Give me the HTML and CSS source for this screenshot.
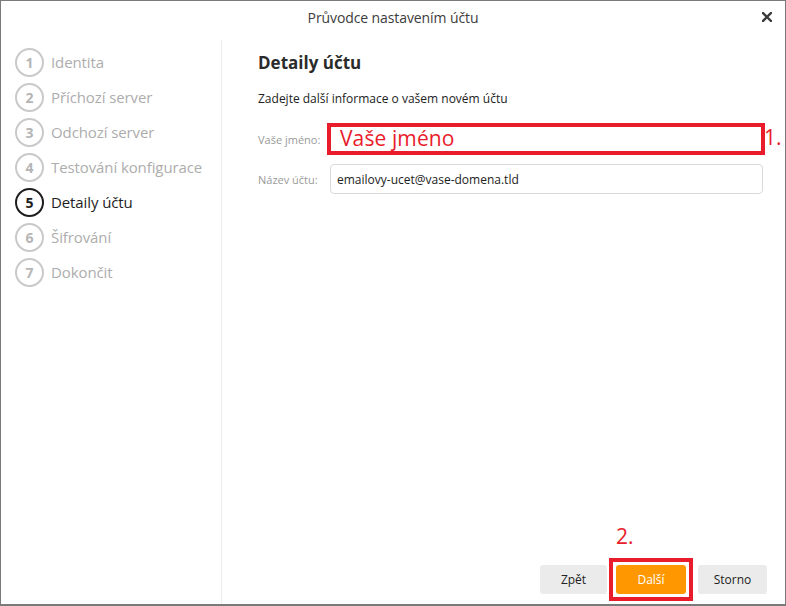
FILE: index.html
```html
<!DOCTYPE html>
<html lang="cs">
<head>
<meta charset="utf-8">
<title>Průvodce nastavením účtu</title>
<link rel="stylesheet" href="styles.css">
</head>
<body>
<div class="window">
  <header class="titlebar">
    <span class="title">Průvodce nastavením účtu</span>
    <span class="close" aria-label="Zavřít">
      <svg width="10" height="10" viewBox="0 0 10 10"><path d="M1 1 L9 9 M9 1 L1 9" stroke="#3a3a3a" stroke-width="2.4" stroke-linecap="square"/></svg>
    </span>
  </header>
  <div class="body">
    <nav class="sidebar">
      <div class="step"><span class="num">1</span><span class="label">Identita</span></div>
      <div class="step"><span class="num">2</span><span class="label">Příchozí server</span></div>
      <div class="step"><span class="num">3</span><span class="label">Odchozí server</span></div>
      <div class="step"><span class="num">4</span><span class="label">Testování konfigurace</span></div>
      <div class="step active"><span class="num">5</span><span class="label">Detaily účtu</span></div>
      <div class="step"><span class="num">6</span><span class="label">Šifrování</span></div>
      <div class="step"><span class="num">7</span><span class="label">Dokončit</span></div>
    </nav>
    <main class="main">
      <h1 class="heading">Detaily účtu</h1>
      <p class="intro">Zadejte další informace o vašem novém účtu</p>
      <div class="form">
        <label class="flabel">Vaše jméno:</label>
        <div class="annot-box"><span class="annot-text">Vaše jméno</span><span class="annot-num n1">1.</span></div>
        <label class="flabel">Název účtu:</label>
        <div class="input">emailovy-ucet@vase-domena.tld</div>
      </div>
      <div class="spacer"></div>
      <footer class="footer">
        <button class="btn">Zpět</button>
        <div class="btn-wrap">
          <span class="annot-num n2">2.</span>
          <button class="btn primary">Další</button>
          <span class="btn-frame"></span>
        </div>
        <button class="btn storno">Storno</button>
      </footer>
    </main>
  </div>
</div>
</body>
</html>
```

FILE: styles.css
```css
* { box-sizing: border-box; }
html, body { margin: 0; padding: 0; background: #fff; }
body { font-family: "Open Sans", "Noto Sans", "DejaVu Sans", sans-serif; color: #222; }

.window {
  width: 786px;
  height: 606px;
  border: 1px solid #7a7a7a;
  border-bottom-width: 2px;
  display: flex;
  flex-direction: column;
  background: #fff;
}

.titlebar {
  height: 39px;
  flex: none;
  display: flex;
  align-items: center;
  justify-content: center;
  position: relative;
}
.title { font-size: 14px; color: #3c3c3c; letter-spacing: -0.1px; margin-top: -6px; }
.close {
  position: absolute;
  right: 13px;
  top: 11px;
  width: 10px;
  height: 10px;
  display: block;
  line-height: 0;
}

.body { flex: 1; display: flex; min-height: 0; }

.sidebar {
  width: 221px;
  flex: none;
  border-right: 1px solid #ececec;
  padding: 5px 0 0 14px;
}
.step { height: 35px; display: flex; align-items: center; gap: 7px; }
.num {
  width: 29px; height: 29px;
  border: 2px solid #c9c9c9;
  border-radius: 50%;
  display: flex; align-items: center; justify-content: center;
  font-size: 14px; font-weight: 700; color: #b5b5b5;
  flex: none;
}
.label { font-size: 15px; color: #adadad; letter-spacing: -0.1px; margin-top: -2px; }
.step.active .num { border-color: #1e1e1e; color: #1e1e1e; }
.step.active .label { color: #1e1e1e; }

.main {
  flex: 1;
  display: flex;
  flex-direction: column;
  padding: 10px 18px 10px 36px;
}
.heading { margin: 0; font-size: 17px; font-weight: 700; color: #2b2b2b; line-height: 26px; }
.intro { margin: 14px 0 0; font-size: 12px; color: #222; line-height: 17px; }

.form {
  margin-top: 16px;
  display: grid;
  grid-template-columns: 72px 1fr;
  row-gap: 9px;
  align-items: center;
  margin-right: 4px;
}
.flabel { font-size: 11px; color: #9a9a9a; }
.annot-box {
  position: relative;
  height: 32px;
  margin: 0 -2px 0 -3px;
  border: 4px solid #e81c2a;
  display: flex;
  align-items: center;
  padding-left: 9px;
}
.annot-text { font-size: 21px; color: #e81c2a; line-height: 1; margin-top: -2px; letter-spacing: 0.1px; }
.annot-num { position: absolute; font-size: 21px; color: #e81c2a; line-height: 1; }
.n1 { left: calc(100% + 3px); top: 0; }
.input {
  height: 30px;
  border: 1px solid #dadada;
  border-radius: 4px;
  display: flex;
  align-items: center;
  padding-left: 6px;
  font-size: 12px;
  color: #222;
}

.spacer { flex: 1; }

.footer { display: flex; justify-content: flex-end; align-items: center; }
.btn {
  height: 29px;
  border: none;
  border-radius: 3px;
  background: #ebebeb;
  font-family: inherit;
  font-size: 12px;
  color: #222;
  width: 67px;
  padding: 0;
}
.btn-wrap { position: relative; margin: 0 12px 0 9px; display: flex; }
.btn.primary { background: #ff9800; color: #fff; width: 70px; }
.btn.storno { width: 69px; }
.btn-frame {
  position: absolute;
  left: -7px; right: -7px; top: -7px; bottom: -7px;
  border: 4px solid #e81c2a;
}
.n2 { left: 0; top: -39px; }
```
